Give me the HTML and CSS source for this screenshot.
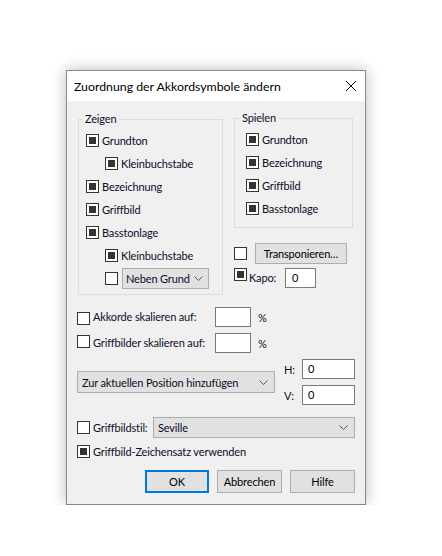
FILE: index.html
```html
<!DOCTYPE html>
<html>
<head>
<meta charset="utf-8">
<title>Zuordnung der Akkordsymbole ändern</title>
<link rel="stylesheet" href="styles.css">
</head>
<body>
<div class="stage">
  <div class="dialog">
    <div class="titlebar">
      <span class="title">Zuordnung der Akkordsymbole ändern</span>
      <svg class="close" width="10" height="10" viewBox="0 0 10 10"><path d="M0 0L10 10M10 0L0 10" stroke="#000" stroke-width="1" fill="none"/></svg>
    </div>
    <div class="body">
      <div class="top">
        <div class="group zeigen">
          <div class="legend">Zeigen</div>
          <div class="rows">
            <div class="row"><span class="cb on"></span><span class="lbl">Grundton</span></div>
            <div class="row ind"><span class="cb on"></span><span class="lbl">Kleinbuchstabe</span></div>
            <div class="row"><span class="cb on"></span><span class="lbl">Bezeichnung</span></div>
            <div class="row"><span class="cb on"></span><span class="lbl">Griffbild</span></div>
            <div class="row"><span class="cb on"></span><span class="lbl">Basstonlage</span></div>
            <div class="row ind"><span class="cb on"></span><span class="lbl">Kleinbuchstabe</span></div>
            <div class="row ind"><span class="cb"></span>
              <div class="select sel-neben"><span>Neben Grund</span><svg class="chev" width="9" height="5" viewBox="0 0 9 5"><path d="M0.5 0.5L4.5 4.5L8.5 0.5" stroke="#555" stroke-width="1" fill="none"/></svg></div>
            </div>
          </div>
        </div>
        <div class="rcol">
          <div class="group spielen">
            <div class="legend">Spielen</div>
            <div class="rows">
              <div class="row"><span class="cb on"></span><span class="lbl">Grundton</span></div>
              <div class="row"><span class="cb on"></span><span class="lbl">Bezeichnung</span></div>
              <div class="row"><span class="cb on"></span><span class="lbl">Griffbild</span></div>
              <div class="row"><span class="cb on"></span><span class="lbl">Basstonlage</span></div>
            </div>
          </div>
          <div class="trow"><span class="cb"></span><div class="btn tbtn">Transponieren…</div></div>
          <div class="krow"><span class="cb on"></span><span class="klabel">Kapo:</span><div class="input kinput">0</div></div>
        </div>
      </div>

      <div class="srow s1"><span class="cb"></span><span class="slabel">Akkorde skalieren auf:</span><div class="input sinput"></div><span class="pct">%</span></div>
      <div class="srow s2"><span class="cb"></span><span class="slabel">Griffbilder skalieren auf:</span><div class="input sinput"></div><span class="pct">%</span></div>

      <div class="pos">
        <div class="select sel-pos"><span>Zur aktuellen Position hinzufügen</span><svg class="chev" width="9" height="5" viewBox="0 0 9 5"><path d="M0.5 0.5L4.5 4.5L8.5 0.5" stroke="#555" stroke-width="1" fill="none"/></svg></div>
        <div class="hv">
          <div class="hvrow"><span class="hvlabel">H:</span><div class="input hvinput">0</div></div>
          <div class="hvrow v"><span class="hvlabel">V:</span><div class="input hvinput">0</div></div>
        </div>
      </div>

      <div class="stylerow"><span class="cb"></span><span class="stlabel">Griffbildstil:</span>
        <div class="select sel-style"><span>Seville</span><svg class="chev" width="9" height="5" viewBox="0 0 9 5"><path d="M0.5 0.5L4.5 4.5L8.5 0.5" stroke="#555" stroke-width="1" fill="none"/></svg></div>
      </div>
      <div class="fontrow"><span class="cb on"></span><span class="lbl">Griffbild-Zeichensatz verwenden</span></div>

      <div class="buttons">
        <div class="btn dbtn ok">OK</div>
        <div class="btn dbtn">Abbrechen</div>
        <div class="btn dbtn">Hilfe</div>
      </div>
    </div>
  </div>
</div>
</body>
</html>
```
FILE: styles.css
```css
* { box-sizing: border-box; }
html, body { margin: 0; background: #fff; }
body {
  font-family: Lato, "Noto Sans", sans-serif;
  font-size: 11px;
  letter-spacing: -0.15px;
  color: #0c0c2a;
}
.stage { padding: 70px 0 0 66px; }
.dialog {
  width: 300px;
  border: 1px solid #8a8a8a;
  background: #f0f0f0;
  box-shadow: 0 0 14px rgba(0, 0, 0, 0.28);
}
.titlebar {
  height: 30px;
  background: #fff;
  display: flex;
  align-items: center;
  justify-content: space-between;
  padding: 0 9px 0 7px;
}
.title { color: #000; white-space: nowrap; font-size: 12.3px; letter-spacing: 0; }
.close { display: block; }

.body { padding: 0 10px 11px 10px; }

.top {
  display: flex;
  align-items: flex-start;
  gap: 11px;
  margin: 18px 0 0 1px;
}
.group { border: 1px solid #dcdcdc; }
.legend {
  width: fit-content;
  height: 16px;
  line-height: 16px;
  margin: -9px 0 2px 4px;
  padding: 0 2px;
  background: #f0f0f0;
  white-space: nowrap;
}
.zeigen { width: 145px; }
.zeigen .rows { padding: 0 0 4px 7px; }
.spielen { width: 119px; margin-top: -1px; }
.spielen .legend { margin-left: 5px; }
.spielen .rows { padding: 0 0 7px 11px; }

.row { display: flex; align-items: center; height: 23px; white-space: nowrap; }
.row.ind { padding-left: 19px; }

.cb {
  width: 13px;
  height: 13px;
  border: 1px solid #333;
  background: #fff;
  flex: none;
  margin-right: 3px;
}
.cb.on { background: #333; box-shadow: inset 0 0 0 2px #fff; }

.select {
  display: flex;
  align-items: center;
  justify-content: space-between;
  border: 1px solid #adadad;
  background: #e1e1e1;
  white-space: nowrap;
  flex: none;
}
.chev { display: block; flex: none; }
.sel-neben { width: 87px; height: 21px; margin-left: 1px; padding: 0 5px 0 3px; }
.sel-pos { width: 198px; height: 22px; padding: 0 6px 0 4px; }
.sel-style { width: 202px; height: 21px; padding: 0 6px 0 4px; }

.input {
  background: #fff;
  border: 1px solid #7a7a7a;
  color: #000;
  flex: none;
  line-height: 18px;
  padding-left: 5px;
}

.btn {
  background: #e1e1e1;
  border: 1px solid #adadad;
  color: #000;
  display: flex;
  align-items: center;
  justify-content: center;
  white-space: nowrap;
  flex: none;
}

.rcol { display: flex; flex-direction: column; }
.trow { display: flex; align-items: center; height: 21px; margin-top: 15px; }
.tbtn { width: 92px; height: 21px; margin-left: 5px; }
.krow { display: flex; align-items: flex-start; margin-top: 4px; }
.klabel { width: 36px; line-height: 20px; margin-left: -1px; }
.kinput { width: 31px; height: 20px; padding-left: 6px; }

.srow { display: flex; align-items: flex-start; height: 20px; }
.srow.s1 { margin-top: 12px; }
.srow.s1 .cb { margin-top: 5px; }
.srow.s2 { margin-top: 6px; }
.srow.s2 .cb { margin-top: 2px; }
.slabel { width: 122px; line-height: 20px; white-space: nowrap; }
.sinput { width: 36px; height: 20px; }
.pct { margin-left: 7px; line-height: 22px; }

.pos { display: flex; align-items: center; margin-top: 6px; }
.hv { margin-left: 9px; }
.hvrow { display: flex; align-items: center; }
.hvrow.v { margin-top: 6px; }
.hvlabel { width: 18px; }
.hvinput { width: 53px; height: 20px; }

.stylerow { display: flex; align-items: center; margin-top: 12px; }
.stlabel { width: 60px; white-space: nowrap; }

.fontrow { display: flex; align-items: center; height: 16px; margin-top: 5px; white-space: nowrap; }

.buttons { display: flex; justify-content: flex-end; gap: 8px; margin-top: 11px; }
.dbtn { width: 65px; height: 23px; }
.dbtn.ok { width: 64px; border: 2px solid #0078d7; }
```
